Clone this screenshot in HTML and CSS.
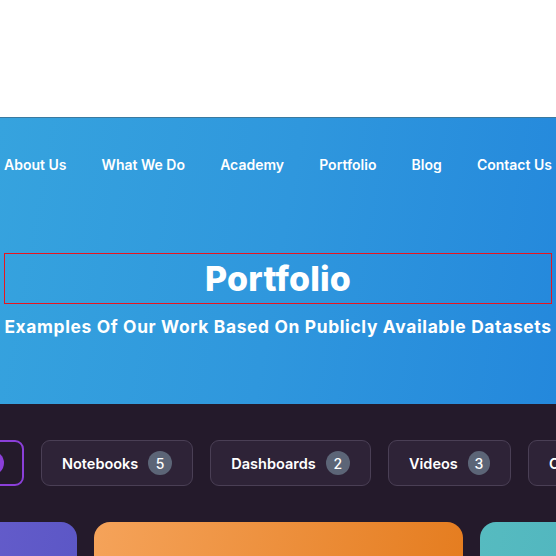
FILE: index.html
```html
<!DOCTYPE html>
<html>
<head>
<meta charset="utf-8">
<link rel="stylesheet" href="styles.css">
</head>
<body>
<div class="topbar"></div>
<section class="hero">
  <nav class="nav">
    <a>About Us</a>
    <a>What We Do</a>
    <a>Academy</a>
    <a>Portfolio</a>
    <a>Blog</a>
    <a>Contact Us</a>
  </nav>
  <div class="title-box"><h1>Portfolio</h1></div>
  <p class="subtitle">Examples Of Our Work Based On Publicly Available Datasets</p>
</section>
<section class="work">
  <div class="filters">
    <div class="track">
      <button class="chip active">All <span class="badge">10</span></button>
      <button class="chip">Notebooks <span class="badge">5</span></button>
      <button class="chip">Dashboards <span class="badge">2</span></button>
      <button class="chip">Videos <span class="badge">3</span></button>
      <button class="chip">Courses <span class="badge">1</span></button>
    </div>
  </div>
  <div class="cards">
    <div class="card purple"></div>
    <div class="card orange"></div>
    <div class="card teal"></div>
  </div>
</section>
</body>
</html>
```
FILE: styles.css
```css
* { box-sizing: border-box; }
html, body { margin: 0; padding: 0; overflow: hidden; }
body {
  width: 556px;
  height: 556px;
  background: #241a2b;
  font-family: Inter, "Open Sans", sans-serif;
  color: #fff;
}
.topbar { height: 117px; background: #fff; }
.hero {
  height: 287px;
  background: linear-gradient(100deg, #36a3de 0%, #2f97dd 50%, #2488dc 100%);
  border-top: 1px solid #3a7aa0;
  padding: 0 4px;
  display: flex;
  flex-direction: column;
}
.nav {
  display: flex;
  justify-content: space-between;
  margin-top: 38px;
  font-weight: 600;
  font-size: 14px;
  line-height: 18px;
}
.nav a { color: #fff; }
.title-box {
  margin-top: 79px;
  border: 1px solid #e8151f;
  height: 51px;
  display: flex;
  align-items: center;
  justify-content: center;
}
.title-box h1 {
  margin: 0;
  font-size: 34px;
  font-weight: 800;
  letter-spacing: 0.2px;
}
.subtitle {
  margin: 12px 0 0;
  text-align: center;
  font-size: 17.4px;
  font-weight: 700;
  letter-spacing: 0.65px;
  white-space: nowrap;
}
.work { overflow: hidden; }
.filters { padding-top: 36px; height: 118px; }
.track {
  display: flex;
  gap: 17px;
  margin-left: -76px;
}
.chip {
  flex: none;
  height: 46px;
  display: flex;
  align-items: center;
  justify-content: center;
  gap: 10px;
  padding: 0 20px;
  background: #2e2337;
  border: 1px solid #4a3f55;
  border-radius: 9px;
  color: #fff;
  font-family: inherit;
  font-size: 14.5px;
  font-weight: 600;
}
.chip.active {
  border: 2px solid #8b3fd9;
  background: #241a2b;
  width: 100px;
  justify-content: flex-end;
  padding-right: 18px;
}
.chip:nth-child(2) { width: 152px; }
.chip:nth-child(3) { width: 161px; }
.chip:nth-child(4) { width: 123px; }
.badge {
  width: 24px;
  height: 24px;
  border-radius: 50%;
  background: #5c6577;
  display: inline-flex;
  align-items: center;
  justify-content: center;
  font-size: 14px;
  font-weight: 500;
}
.active .badge { background: #8b3fd9; }
.cards {
  display: flex;
  justify-content: center;
  gap: 17px;
}
.card {
  flex: none;
  width: 369px;
  height: 34px;
  border-radius: 16px 16px 0 0;
}
.purple { background: linear-gradient(100deg, #7a6ad6, #5c57c6); }
.orange { background: linear-gradient(100deg, #f5a35a, #e57d20); }
.teal { background: linear-gradient(100deg, #56bbc0, #45a9bd); }
```
